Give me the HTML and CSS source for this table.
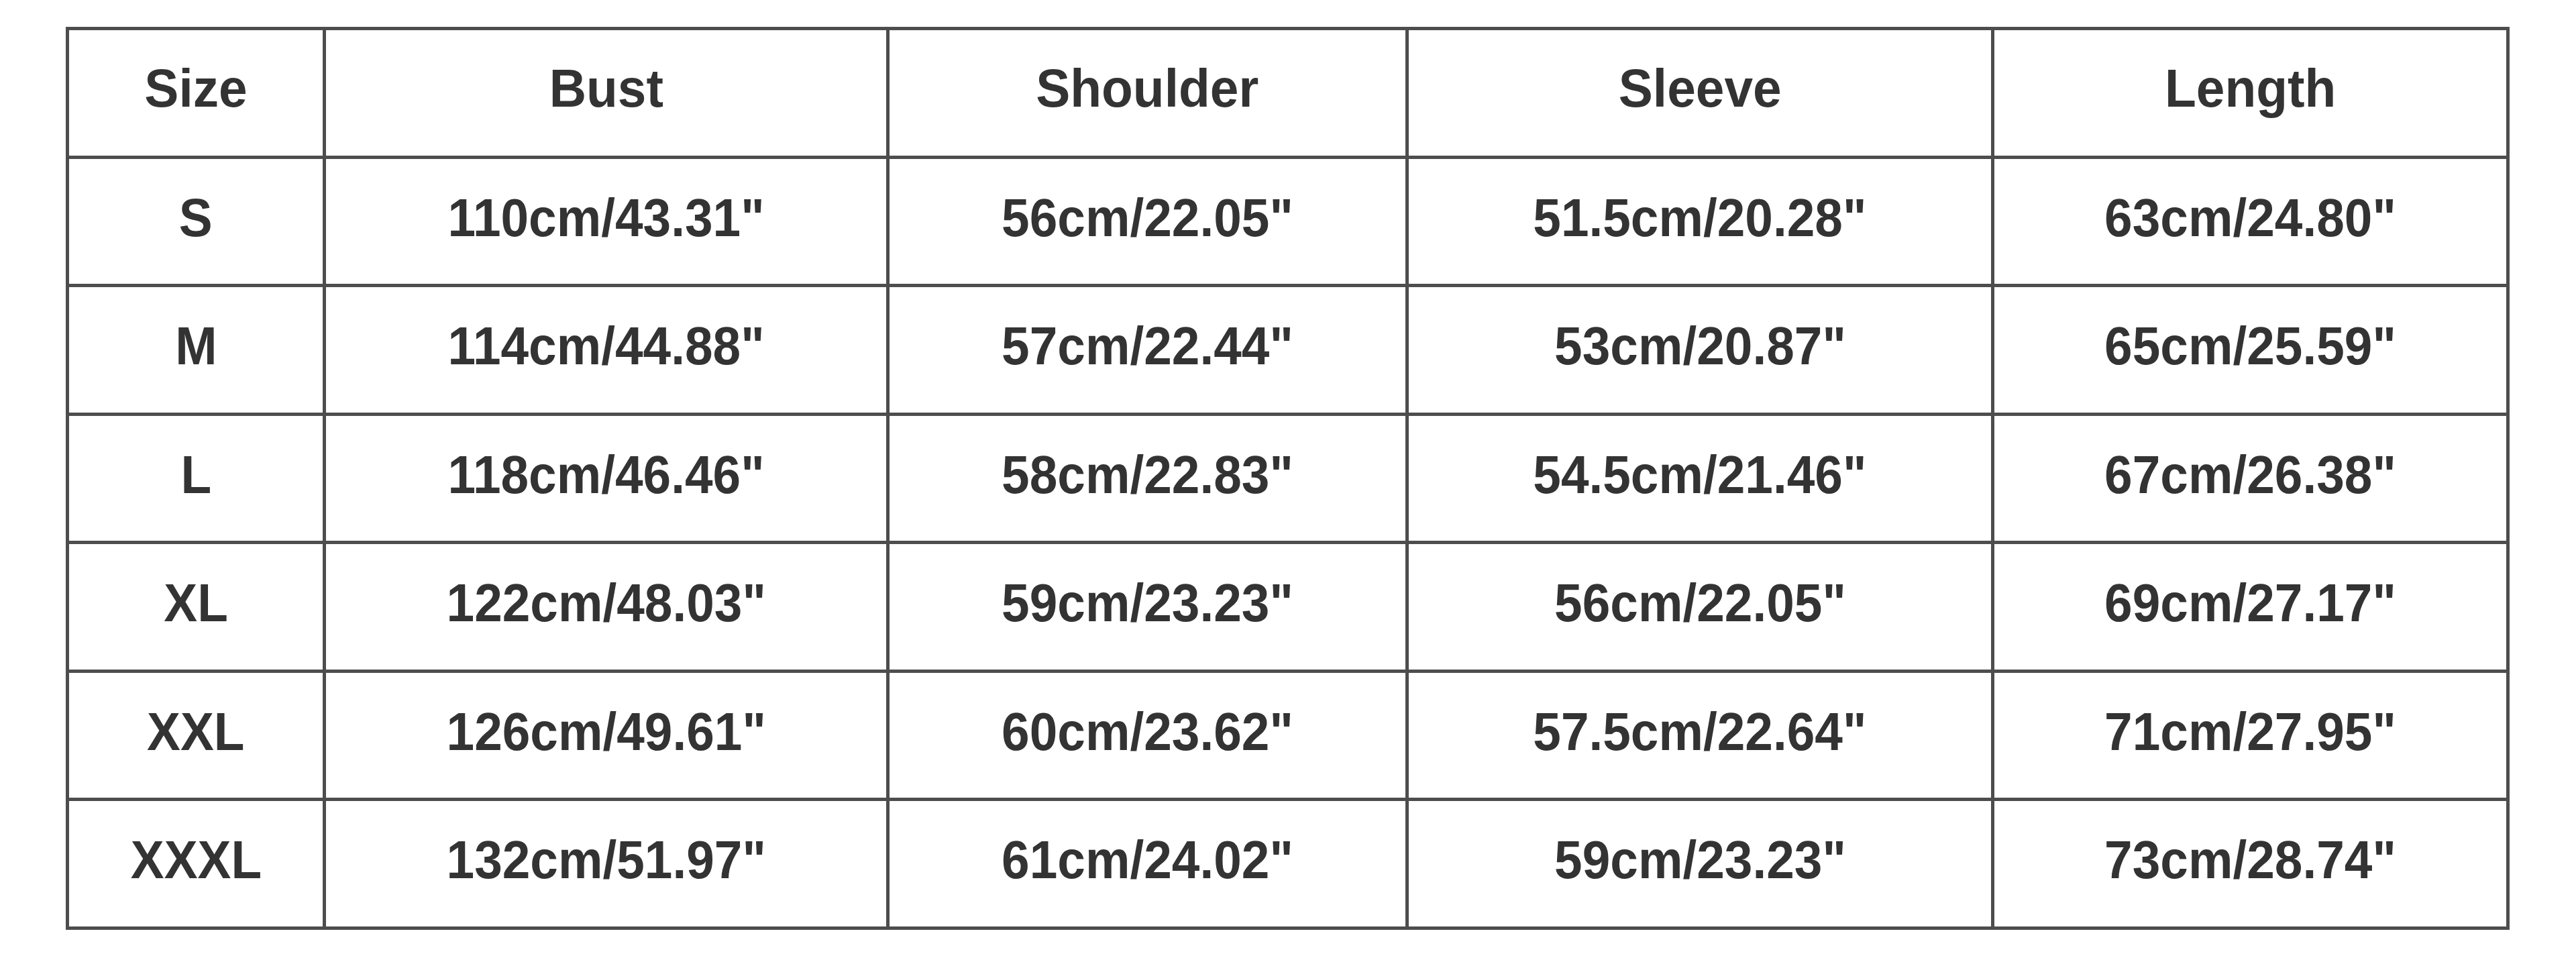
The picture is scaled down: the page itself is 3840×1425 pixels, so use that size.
FILE: index.html
```html
<!DOCTYPE html>
<html lang="en">
<head>
<meta charset="utf-8">
<title>Size Chart</title>
<link rel="stylesheet" href="styles.css">
</head>
<body>
<div class="chart">
  <div class="cell head"><span class="t">Size</span></div>
  <div class="cell head"><span class="t">Bust</span></div>
  <div class="cell head"><span class="t">Shoulder</span></div>
  <div class="cell head"><span class="t">Sleeve</span></div>
  <div class="cell head"><span class="t">Length</span></div>

  <div class="cell"><span class="t">S</span></div>
  <div class="cell"><span class="t">110cm/43.31"</span></div>
  <div class="cell"><span class="t">56cm/22.05"</span></div>
  <div class="cell"><span class="t">51.5cm/20.28"</span></div>
  <div class="cell"><span class="t">63cm/24.80"</span></div>

  <div class="cell"><span class="t">M</span></div>
  <div class="cell"><span class="t">114cm/44.88"</span></div>
  <div class="cell"><span class="t">57cm/22.44"</span></div>
  <div class="cell"><span class="t">53cm/20.87"</span></div>
  <div class="cell"><span class="t">65cm/25.59"</span></div>

  <div class="cell"><span class="t">L</span></div>
  <div class="cell"><span class="t">118cm/46.46"</span></div>
  <div class="cell"><span class="t">58cm/22.83"</span></div>
  <div class="cell"><span class="t">54.5cm/21.46"</span></div>
  <div class="cell"><span class="t">67cm/26.38"</span></div>

  <div class="cell"><span class="t">XL</span></div>
  <div class="cell"><span class="t">122cm/48.03"</span></div>
  <div class="cell"><span class="t">59cm/23.23"</span></div>
  <div class="cell"><span class="t">56cm/22.05"</span></div>
  <div class="cell"><span class="t">69cm/27.17"</span></div>

  <div class="cell"><span class="t">XXL</span></div>
  <div class="cell"><span class="t">126cm/49.61"</span></div>
  <div class="cell"><span class="t">60cm/23.62"</span></div>
  <div class="cell"><span class="t">57.5cm/22.64"</span></div>
  <div class="cell"><span class="t">71cm/27.95"</span></div>

  <div class="cell"><span class="t">XXXL</span></div>
  <div class="cell"><span class="t">132cm/51.97"</span></div>
  <div class="cell"><span class="t">61cm/24.02"</span></div>
  <div class="cell"><span class="t">59cm/23.23"</span></div>
  <div class="cell"><span class="t">73cm/28.74"</span></div>
</div>
</body>
</html>
```

FILE: styles.css
```css
html, body {
  margin: 0;
  padding: 0;
  background: #ffffff;
}

body {
  font-family: "Liberation Sans", Arial, sans-serif;
  color: #333333;
}

.chart {
  display: grid;
  width: max-content;
  margin: 40px 0 0 98px;
  padding: 5px;
  gap: 5px;
  background: #4d4d4d;
  grid-template-columns: 378px 835px 769px 868px 763px;
  grid-template-rows: repeat(7, 186.5px);
}

.cell {
  background: #ffffff;
  display: flex;
  align-items: center;
  justify-content: center;
  padding-bottom: 10px;
  box-sizing: border-box;
  font-size: 80px;
  font-weight: 700;
  white-space: nowrap;
}

.t {
  display: inline-block;
  transform: scaleX(0.935);
}

.head {
  font-size: 79px;
  padding-bottom: 13px;
}

.head .t {
  transform: scaleX(0.97);
}
```
